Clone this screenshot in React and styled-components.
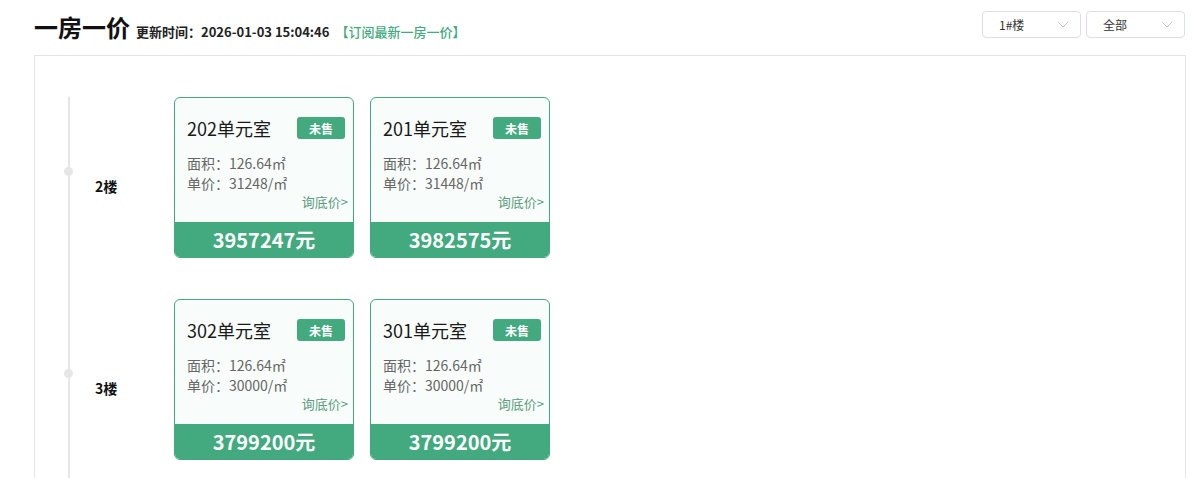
import React from 'react';
import styled, { createGlobalStyle } from 'styled-components';

const GREEN = '#43a97f';

const FLOORS = [
  {
    name: '2楼',
    rooms: [
      { no: '202单元室', area: '126.64', unit: '31248', total: '3957247' },
      { no: '201单元室', area: '126.64', unit: '31448', total: '3982575' },
    ],
  },
  {
    name: '3楼',
    rooms: [
      { no: '302单元室', area: '126.64', unit: '30000', total: '3799200' },
      { no: '301单元室', area: '126.64', unit: '30000', total: '3799200' },
    ],
  },
];

const GlobalStyle = createGlobalStyle`
  html, body {
    margin: 0;
    padding: 0;
    background: #fff;
    font-family: "Noto Sans CJK SC", "Noto Sans", sans-serif;
    color: #222;
    overflow: hidden;
  }
`;

const Page = styled.div`
  width: 1204px;
  height: 478px;
  padding: 0 18px 0 34px;
  box-sizing: border-box;
  display: flex;
  flex-direction: column;
`;

const Header = styled.header`
  flex-shrink: 0;
  height: 55px;
  display: flex;
  align-items: center;
  justify-content: space-between;
`;

const TitleGroup = styled.div`
  display: flex;
  align-items: baseline;
  margin-top: -1px;
`;

const Title = styled.h1`
  margin: 0 6px 0 0;
  font-size: 24px;
  font-weight: 700;
  color: #111;
  line-height: 30px;
`;

const UpdateTime = styled.span`
  font-size: 13px;
  font-weight: 700;
  color: #222;
`;

const Subscribe = styled.a`
  margin-left: 6px;
  font-size: 13px;
  font-weight: 500;
  color: ${GREEN};
  text-decoration: none;
`;

const Filters = styled.div`
  display: flex;
  gap: 5px;
  margin-right: 1px;
  margin-top: -6px;
`;

const Select = styled.div`
  width: 99px;
  height: 27px;
  box-sizing: border-box;
  border: 1px solid #dcdfe6;
  border-radius: 4px;
  padding: 0 11px 0 16px;
  display: flex;
  align-items: center;
  justify-content: space-between;
  font-size: 12px;
  color: #333;
  background: #fff;
`;

const Panel = styled.section`
  flex: 1;
  min-height: 0;
  border: 1px solid #e5e5e5;
  border-bottom: none;
  padding: 41px 0 0 33px;
`;

const Timeline = styled.div`
  border-left: 2px solid #e6e6e6;
  height: 100%;
`;

const FloorRow = styled.div`
  position: relative;
  display: flex;
  margin-bottom: 41px;
`;

const Dot = styled.span`
  position: absolute;
  left: -6px;
  top: 70px;
  width: 9px;
  height: 9px;
  border-radius: 50%;
  background: #e6e6e6;
`;

const FloorLabel = styled.div`
  width: 104px;
  box-sizing: border-box;
  padding: 79px 0 0 25px;
  font-size: 14px;
  font-weight: 700;
  line-height: 20px;
  color: #111;
`;

const Cards = styled.div`
  display: flex;
  gap: 16px;
`;

const Card = styled.div`
  width: 180px;
  height: 161px;
  box-sizing: border-box;
  border: 1px solid ${GREEN};
  border-radius: 6px;
  background: #f8fdfb;
  overflow: hidden;
  display: flex;
  flex-direction: column;
`;

const CardBody = styled.div`
  flex: 1;
  padding: 18px 8px 0 12px;
`;

const CardHead = styled.div`
  display: flex;
  align-items: center;
  justify-content: space-between;
  height: 24px;
`;

const RoomNo = styled.span`
  font-size: 18px;
  color: #1a1a1a;
  line-height: 24px;
`;

const Badge = styled.span`
  width: 48px;
  height: 22px;
  border-radius: 3px;
  background: ${GREEN};
  color: #fff;
  font-size: 12px;
  font-weight: 700;
  display: flex;
  align-items: center;
  justify-content: center;
`;

const Details = styled.div`
  margin-top: 13px;
  font-size: 14px;
  line-height: 20px;
  color: #666;
`;

const Inquire = styled.div`
  text-align: right;
  font-size: 13px;
  line-height: 18px;
  margin-right: -3px;
  color: #5b9c80;
`;

const PriceBar = styled.div`
  height: 35px;
  background: ${GREEN};
  color: #fff;
  font-size: 20px;
  font-weight: 700;
  display: flex;
  align-items: center;
  justify-content: center;
`;

const Chevron = () => (
  <svg width="12" height="7" viewBox="0 0 12 7" fill="none">
    <path d="M1 1l5 5 5-5" stroke="#c0c4cc" strokeWidth="1" />
  </svg>
);

const RoomCard = ({ room }) => (
  <Card>
    <CardBody>
      <CardHead>
        <RoomNo>{room.no}</RoomNo>
        <Badge>未售</Badge>
      </CardHead>
      <Details>
        <div>面积：{room.area}㎡</div>
        <div>单价：{room.unit}/㎡</div>
      </Details>
      <Inquire>询底价&gt;</Inquire>
    </CardBody>
    <PriceBar>{room.total}元</PriceBar>
  </Card>
);

export default function App() {
  return (
    <Page>
      <GlobalStyle />
      <Header>
        <TitleGroup>
          <Title>一房一价</Title>
          <UpdateTime>更新时间：2026-01-03 15:04:46</UpdateTime>
          <Subscribe href="#">【订阅最新一房一价】</Subscribe>
        </TitleGroup>
        <Filters>
          <Select>
            <span>1#楼</span>
            <Chevron />
          </Select>
          <Select>
            <span>全部</span>
            <Chevron />
          </Select>
        </Filters>
      </Header>
      <Panel>
        <Timeline>
          {FLOORS.map(floor => (
            <FloorRow key={floor.name}>
              <Dot />
              <FloorLabel>{floor.name}</FloorLabel>
              <Cards>
                {floor.rooms.map(room => (
                  <RoomCard key={room.no} room={room} />
                ))}
              </Cards>
            </FloorRow>
          ))}
        </Timeline>
      </Panel>
    </Page>
  );
}
